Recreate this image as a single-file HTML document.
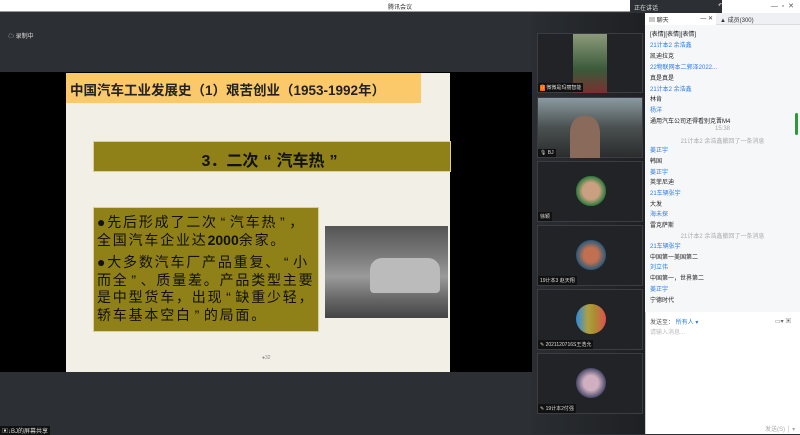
<!DOCTYPE html>
<html><head><meta charset="utf-8"><style>
*{margin:0;padding:0;box-sizing:border-box}
body{width:800px;height:434px;overflow:hidden;position:relative;background:#2c2f33;font-family:"Liberation Sans","Noto Sans CJK SC",sans-serif;font-size:6px}
.a{position:absolute}
.chat div{position:absolute;left:5px;font-size:6px;color:#222;white-space:nowrap}
.chat .b{color:#2a7de1}
.chat .s{color:#aaa;left:0;width:155px;text-align:center}
.tile{position:absolute;left:537px;width:106px;background:#212326;border:1px solid #3a3d42}
.lbl{position:absolute;left:0;bottom:0;background:#111;color:#ddd;font-size:5px;padding:1px 2px;white-space:nowrap}
.av{position:absolute;left:38px;top:14px;width:30px;height:30px;border-radius:50%}
.q{display:inline-block;width:12px;text-align:center}
</style></head><body>
<div class="a" style="left:0;top:0;width:630px;height:12px;background:#fff;border-bottom:1px solid #999"></div>
<div class="a" style="left:388px;top:2px;font-size:6px;color:#333">腾讯会议</div>
<div class="a" style="left:630px;top:0;width:92px;height:13px;background:#2c2f33;color:#ddd;font-size:6px;padding:3px 4px">正在讲话<span style="position:absolute;left:88px;top:2px">↶</span></div>
<div class="a" style="left:722px;top:0;width:78px;height:13px;background:#fff;color:#555;font-size:7px;text-align:right;padding-right:6px;padding-top:2px">— &nbsp;▫ &nbsp;✕</div>
<div class="a" style="left:8px;top:31px;color:#ddd;font-size:6px">☁ 录制中</div>
<div class="a" style="left:0;top:72px;width:532px;height:300px;background:#000"></div>
<!-- slide -->
<div class="a" style="left:66px;top:73px;width:384px;height:299px;background:#f2f0e6"></div>
<div class="a" style="left:66px;top:73px;width:355px;height:30px;background:#fbc96a;font-weight:bold;font-size:13.5px;color:#222;padding:6px 4px;white-space:nowrap">中国汽车工业发展史（1）艰苦创业（1953-1992年）</div>
<div class="a" style="left:93px;top:141px;width:358px;height:31px;background:#8f8017;border:1px solid #d8cf9a;font-size:16px;font-weight:bold;color:#111;text-align:center;padding-top:5px">3．二次<span class="q" style="width:18px">“</span>汽车热<span class="q" style="width:18px">”</span></div>
<div class="a" style="left:93px;top:207px;width:226px;height:125px;background:#8f8017;border:1px solid #d8cf9a;font-size:14px;line-height:17.5px;letter-spacing:1.8px;color:#111;padding:6px 3px;white-space:nowrap;overflow:hidden">●先后形成了二次<span class="q">“</span>汽车热<span class="q">”</span>，<br>全国汽车企业达<b style="letter-spacing:0">2000</b>余家。<div style="height:5px"></div>●大多数汽车厂产品重复、<span class="q">“</span>小<br>而全<span class="q">”</span>、质量差。产品类型主要<br>是中型货车，出现<span class="q">“</span>缺重少轻，<br>轿车基本空白<span class="q">”</span>的局面。</div>
<div class="a" style="left:325px;top:226px;width:123px;height:92px;background:linear-gradient(180deg,#555 0%,#777 30%,#9a9a9a 55%,#666 80%,#444 100%)"></div>
<div class="a" style="left:370px;top:258px;width:70px;height:35px;background:#bbb;border-radius:12px 12px 4px 4px"></div>
<div class="a" style="left:262px;top:355px;font-size:5px;color:#888">●32</div>
<div class="a" style="left:0;top:426px;background:#111;color:#ddd;font-size:6px;padding:0 2px">▣↓BJ的屏幕共享</div>
<!-- video column -->
<div class="a" style="left:532px;top:13px;width:113px;height:421px;background:linear-gradient(90deg,#2a2d31,#1e2023)"></div>
<div class="tile" style="top:33px;height:60px"><div class="a" style="left:35px;top:0;width:34px;height:59px;background:linear-gradient(#8c9a7a,#3a5a3a 60%,#7a3030)"></div><div class="lbl" style="background:#111"><span style="background:#f60;color:#fff">⇩</span> 微微是玛丽智能</div></div>
<div class="tile" style="top:97px;height:61px;background:linear-gradient(180deg,#8a9aa0,#4a5050 50%,#2a2c2e)"><div class="a" style="left:32px;top:18px;width:30px;height:42px;background:#8a6a5a;border-radius:40% 40% 0 0"></div><div class="lbl">🎙 BJ</div></div>
<div class="tile" style="top:161px;height:61px"><div class="av" style="background:radial-gradient(#c9a080 40%,#2a7a3a 70%,#ddd 72%)"></div><div class="lbl">徐颖</div></div>
<div class="tile" style="top:225px;height:61px"><div class="av" style="background:radial-gradient(#c07050 35%,#2a5a7a 70%)"></div><div class="lbl">19计本3 赵天翔</div></div>
<div class="tile" style="top:289px;height:61px"><div class="av" style="background:linear-gradient(90deg,#2a8ae0,#b0a040 40%,#a89030 60%,#e05050)"></div><div class="lbl">✎ 2021120716S王浩允</div></div>
<div class="tile" style="top:353px;height:61px"><div class="av" style="background:radial-gradient(#d0b0c0 35%,#4a4a6a 70%)"></div><div class="lbl">✎ 19计本2付强</div></div>
<!-- chat -->
<div class="a" style="left:645px;top:13px;width:155px;height:421px;background:#fff;border-left:1px solid #ccc"></div>
<div class="a" style="left:645px;top:13px;width:155px;height:12px;background:#eef0f3;border-bottom:1px solid #ddd"></div>
<div class="a" style="left:645px;top:13px;width:71px;height:12px;background:#fff;font-size:6px;color:#333;padding:2px 4px">▤ 聊天<span style="position:absolute;right:3px">— ✕</span></div>
<div class="a" style="left:720px;top:15px;font-size:6px;color:#333">▲ 成员(300)</div>
<div class="a" style="left:645px;top:25px;width:155px;height:287px;background:#f6f7f9"></div>
<div class="a" style="left:795px;top:113px;width:3px;height:22px;background:#2a9a3a;border-radius:2px"></div>
<div class="chat a" style="left:645px;top:0;width:155px;height:434px">
<div style="top:29px">[表情][表情][表情]</div>
<div class="b" style="top:40px">21计本2 余浩鑫</div>
<div style="top:51px">凯迪拉克</div>
<div class="b" style="top:62px">22物联网本二郭泽2022...</div>
<div style="top:73px">真是真是</div>
<div class="b" style="top:84px">21计本2 余浩鑫</div>
<div style="top:94px">林肯</div>
<div class="b" style="top:105px">杨洋</div>
<div style="top:116px">通用汽车公司还得看别克晋M4</div>
<div class="s" style="top:126px">15:38</div>
<div class="s" style="top:136px">21计本2 余浩鑫撤回了一条消息</div>
<div class="b" style="top:145px">姜正宇</div>
<div style="top:156px">韩国</div>
<div class="b" style="top:167px">姜正宇</div>
<div style="top:177px">英菲尼迪</div>
<div class="b" style="top:188px">21车辆张宇</div>
<div style="top:199px">大发</div>
<div class="b" style="top:209px">海未探</div>
<div style="top:220px">雷克萨斯</div>
<div class="s" style="top:231px">21计本2 余浩鑫撤回了一条消息</div>
<div class="b" style="top:241px">21车辆张宇</div>
<div style="top:252px">中国第一美国第二</div>
<div class="b" style="top:262px">刘立伟</div>
<div style="top:273px">中国第一，世界第二</div>
<div class="b" style="top:284px">姜正宇</div>
<div style="top:295px">宁德时代</div>
<div style="top:317px;color:#555">发送至： <span style="color:#2a7de1">所有人 ▾</span></div>
<div style="top:327px;color:#bbb">请输入消息...</div>
<div style="top:316px;left:130px;color:#666">▭▾ ▣</div>
<div style="top:424px;left:120px;color:#aaa">发送(S) │ ▾</div>
</div>
</body></html>
